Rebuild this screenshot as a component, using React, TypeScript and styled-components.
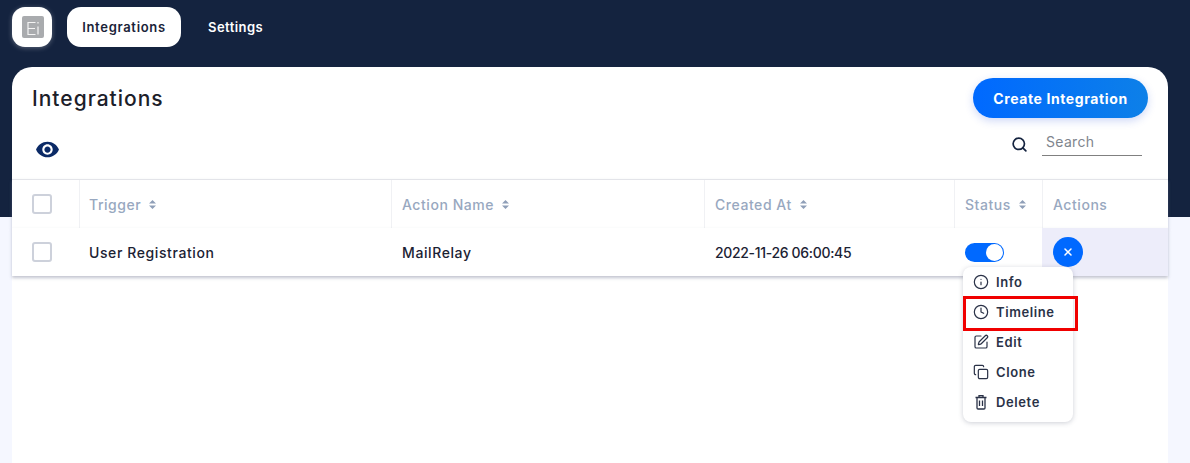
import { Clock, Copy, Info, Search, SquarePen, X } from 'lucide-react';
import { ReactNode } from 'react';
import { MdVisibility } from 'react-icons/md';
import styled, { createGlobalStyle } from 'styled-components';

const GlobalStyle = createGlobalStyle`
  html, body {
    margin: 0;
    height: 463px;
    overflow: hidden;
  }
  body {
    font-family: "Inter", "Noto Sans", "Liberation Sans", sans-serif;
    background: linear-gradient(#14233f 0, #14233f 217px, #f5f7ff 217px);
  }
  * {
    box-sizing: border-box;
  }
`;

const Page = styled.div`
  padding: 7px 22px 0 12px;
`;

const Nav = styled.nav`
  display: flex;
  align-items: center;
  height: 40px;
  margin-bottom: 20px;
`;

const LogoTile = styled.div`
  width: 40px;
  height: 40px;
  margin-right: 15px;
  padding-left: 2px;
  border-radius: 13px;
  background: #fff;
  box-shadow: 0 1px 5px rgba(255, 255, 255, 0.3);
  display: flex;
  align-items: center;
  justify-content: center;
`;

const NavItem = styled.a<{ $active?: boolean }>`
  height: 40px;
  width: ${(p) => (p.$active ? '114px' : 'auto')};
  margin-left: ${(p) => (p.$active ? '0' : '27px')};
  border-radius: 14px;
  background: ${(p) => (p.$active ? '#fff' : 'transparent')};
  color: ${(p) => (p.$active ? '#1a2338' : '#fff')};
  font-size: 13px;
  font-weight: 600;
  letter-spacing: ${(p) => (p.$active ? '0.7px' : '0.45px')};
  display: flex;
  align-items: center;
  justify-content: center;
`;

const Card = styled.main`
  position: relative;
  height: 396px;
  border-radius: 20px 20px 0 0;
  background: #fff;
`;

const TopBar = styled.div`
  display: flex;
  justify-content: space-between;
  padding: 11px 20px 0;
  height: 56px;
`;

const Title = styled.h1`
  margin: 9px 0 0;
  font-size: 21px;
  line-height: 24px;
  font-weight: 500;
  letter-spacing: 1px;
  color: #1c2029;
`;

const CreateButton = styled.button`
  width: 175px;
  height: 40px;
  border: 0;
  border-radius: 20px;
  background: linear-gradient(90deg, #0069ff, #0d80e8);
  box-shadow: 0 3px 8px rgba(40, 80, 220, 0.22);
  color: #fff;
  font: 700 14px "Inter", sans-serif;
  letter-spacing: 0.6px;
`;

const ToolBar = styled.div`
  display: flex;
  align-items: center;
  justify-content: space-between;
  height: 56px;
  padding: 0 26px 8px 23px;
`;

const EyeIcon = styled(MdVisibility)`
  color: #0b2a66;
  font-size: 25px;
  display: block;
  margin-top: 4px;
`;

const SearchBox = styled.div`
  display: flex;
  align-items: flex-start;
  gap: 14px;
  margin-top: -8px;
`;

const SearchIcon = styled(Search)`
  color: #14233f;
  margin-top: 6px;
`;

const SearchField = styled.input`
  width: 100px;
  height: 26px;
  padding: 0 4px 3px;
  border: 0;
  border-bottom: 1px solid #808080;
  outline: none;
  font: 400 14px "Inter", sans-serif;
  letter-spacing: 0.3px;
  &::placeholder {
    color: #80858d;
    opacity: 1;
  }
`;

const Row = styled.div<{ $head?: boolean }>`
  display: grid;
  grid-template-columns: 67px 312px 313px 250px 88px 126px;
  height: ${(p) => (p.$head ? '49px' : '48px')};
  background: #fff;
  border-top: ${(p) => (p.$head ? '1px solid #e3e4e9' : '0')};
  box-shadow: 0 2px 3px rgba(120, 125, 150, 0.45);
  position: relative;
`;

const Cell = styled.div<{ $head?: boolean; $highlight?: boolean; $date?: boolean }>`
  display: flex;
  align-items: center;
  padding-left: ${(p) => (p.$head ? '10px' : '11px')};
  border-left: ${(p) => (p.$head ? '1px solid #f0f1f4' : '0')};
  background: ${(p) => (p.$highlight ? '#ededfa' : 'transparent')};
  color: ${(p) => (p.$head ? '#98a8c0' : '#1b2233')};
  font-size: 14px;
  font-weight: 500;
  letter-spacing: ${(p) => (p.$date ? '-0.33px' : p.$head ? '0.55px' : '0.6px')};
  &:first-child {
    border-left: 0;
    padding-left: 20px;
  }
  &:nth-child(2) {
    padding-left: ${(p) => (p.$head ? '9px' : '10px')};
  }
`;

const Checkbox = styled.span`
  width: 20px;
  height: 20px;
  border: 2px solid #cdd1db;
  border-radius: 3px;
  background: #fff;
`;

const SortArrows = styled.svg`
  width: 7px;
  height: 9px;
  margin-left: 8px;
  fill: #8f9fb8;
`;

const Toggle = styled.span`
  width: 39px;
  height: 19px;
  border-radius: 10px;
  background: #0069ff;
  position: relative;
  &::after {
    content: '';
    position: absolute;
    top: 1px;
    right: 1px;
    width: 17px;
    height: 17px;
    border-radius: 50%;
    background: #fff;
  }
`;

const CloseButton = styled.span`
  width: 30px;
  height: 30px;
  border-radius: 50%;
  background: #0069ff;
  color: #fff;
  display: flex;
  align-items: center;
  justify-content: center;
`;

const Menu = styled.ul`
  position: absolute;
  left: 951px;
  top: 200px;
  width: 110px;
  margin: 0;
  padding: 0 0 5px;
  list-style: none;
  border-radius: 8px;
  background: #fff;
  box-shadow: 0 1px 5px rgba(90, 95, 120, 0.3);
`;

const MenuItem = styled.li`
  height: 30px;
  padding-left: 10px;
  display: flex;
  align-items: center;
  gap: 7px;
  color: #2a3247;
  font-size: 13px;
  font-weight: 600;
  letter-spacing: 0.6px;
  svg {
    flex: none;
    color: #2a3247;
  }
`;

const Callout = styled.div`
  position: absolute;
  left: 951px;
  top: 229px;
  width: 115px;
  height: 35px;
  border: 3px solid #f00000;
`;

const HeadCell = ({ label, sortable = true }: { label: string; sortable?: boolean }) => (
  <Cell $head>
    {label}
    {sortable && (
      <SortArrows viewBox="0 0 7 9">
        <path d="M3.5 0 7 3.6H0zM3.5 9 0 5.4h7z" />
      </SortArrows>
    )}
  </Cell>
);

const TrashIcon = () => (
  <svg width="16" height="16" viewBox="0 0 16 16" fill="none" stroke="currentColor" strokeWidth="1.3">
    <path d="M2.5 3.5h11M6 3.5V1.6h4v1.9M4 3.5v10.4c0 .7.4 1.1 1.1 1.1h5.8c.7 0 1.1-.4 1.1-1.1V3.5M6.5 6.5v5.5M9.5 6.5v5.5" />
  </svg>
);

const menuItems: { label: string; icon: ReactNode }[] = [
  { label: 'Info', icon: <Info size={16} strokeWidth={1.8} /> },
  { label: 'Timeline', icon: <Clock size={16} strokeWidth={1.8} /> },
  { label: 'Edit', icon: <SquarePen size={16} strokeWidth={1.8} /> },
  { label: 'Clone', icon: <Copy size={16} strokeWidth={1.8} /> },
  { label: 'Delete', icon: <TrashIcon /> },
];

const Logo = () => (
  <svg width="22" height="22" viewBox="0 0 22 22">
    <rect width="22" height="22" rx="2" fill="#a9abae" />
    <path
      d="M13.5 6.5H6v12h7.5M6 12.5h7M16 6v1.5M16 10.5v8"
      fill="none"
      stroke="#f4f4f4"
      strokeWidth="1.2"
    />
  </svg>
);

export default function App() {
  return (
    <Page>
      <GlobalStyle />
      <Nav>
        <LogoTile>
          <Logo />
        </LogoTile>
        <NavItem $active>Integrations</NavItem>
        <NavItem>Settings</NavItem>
      </Nav>

      <Card>
        <TopBar>
          <Title>Integrations</Title>
          <CreateButton>Create Integration</CreateButton>
        </TopBar>
        <ToolBar>
          <EyeIcon />
          <SearchBox>
            <SearchIcon size={17} strokeWidth={2.4} />
            <SearchField placeholder="Search" />
          </SearchBox>
        </ToolBar>

        <Row $head>
          <Cell $head>
            <Checkbox />
          </Cell>
          <HeadCell label="Trigger" />
          <HeadCell label="Action Name" />
          <HeadCell label="Created At" />
          <HeadCell label="Status" />
          <HeadCell label="Actions" sortable={false} />
        </Row>
        <Row>
          <Cell>
            <Checkbox />
          </Cell>
          <Cell>User Registration</Cell>
          <Cell>MailRelay</Cell>
          <Cell $date>2022-11-26 06:00:45</Cell>
          <Cell>
            <Toggle />
          </Cell>
          <Cell $highlight>
            <CloseButton>
              <X size={12} strokeWidth={3} />
            </CloseButton>
          </Cell>
        </Row>

        <Menu>
          {menuItems.map((item) => (
            <MenuItem key={item.label}>
              {item.icon}
              {item.label}
            </MenuItem>
          ))}
        </Menu>
        <Callout />
      </Card>
    </Page>
  );
}
